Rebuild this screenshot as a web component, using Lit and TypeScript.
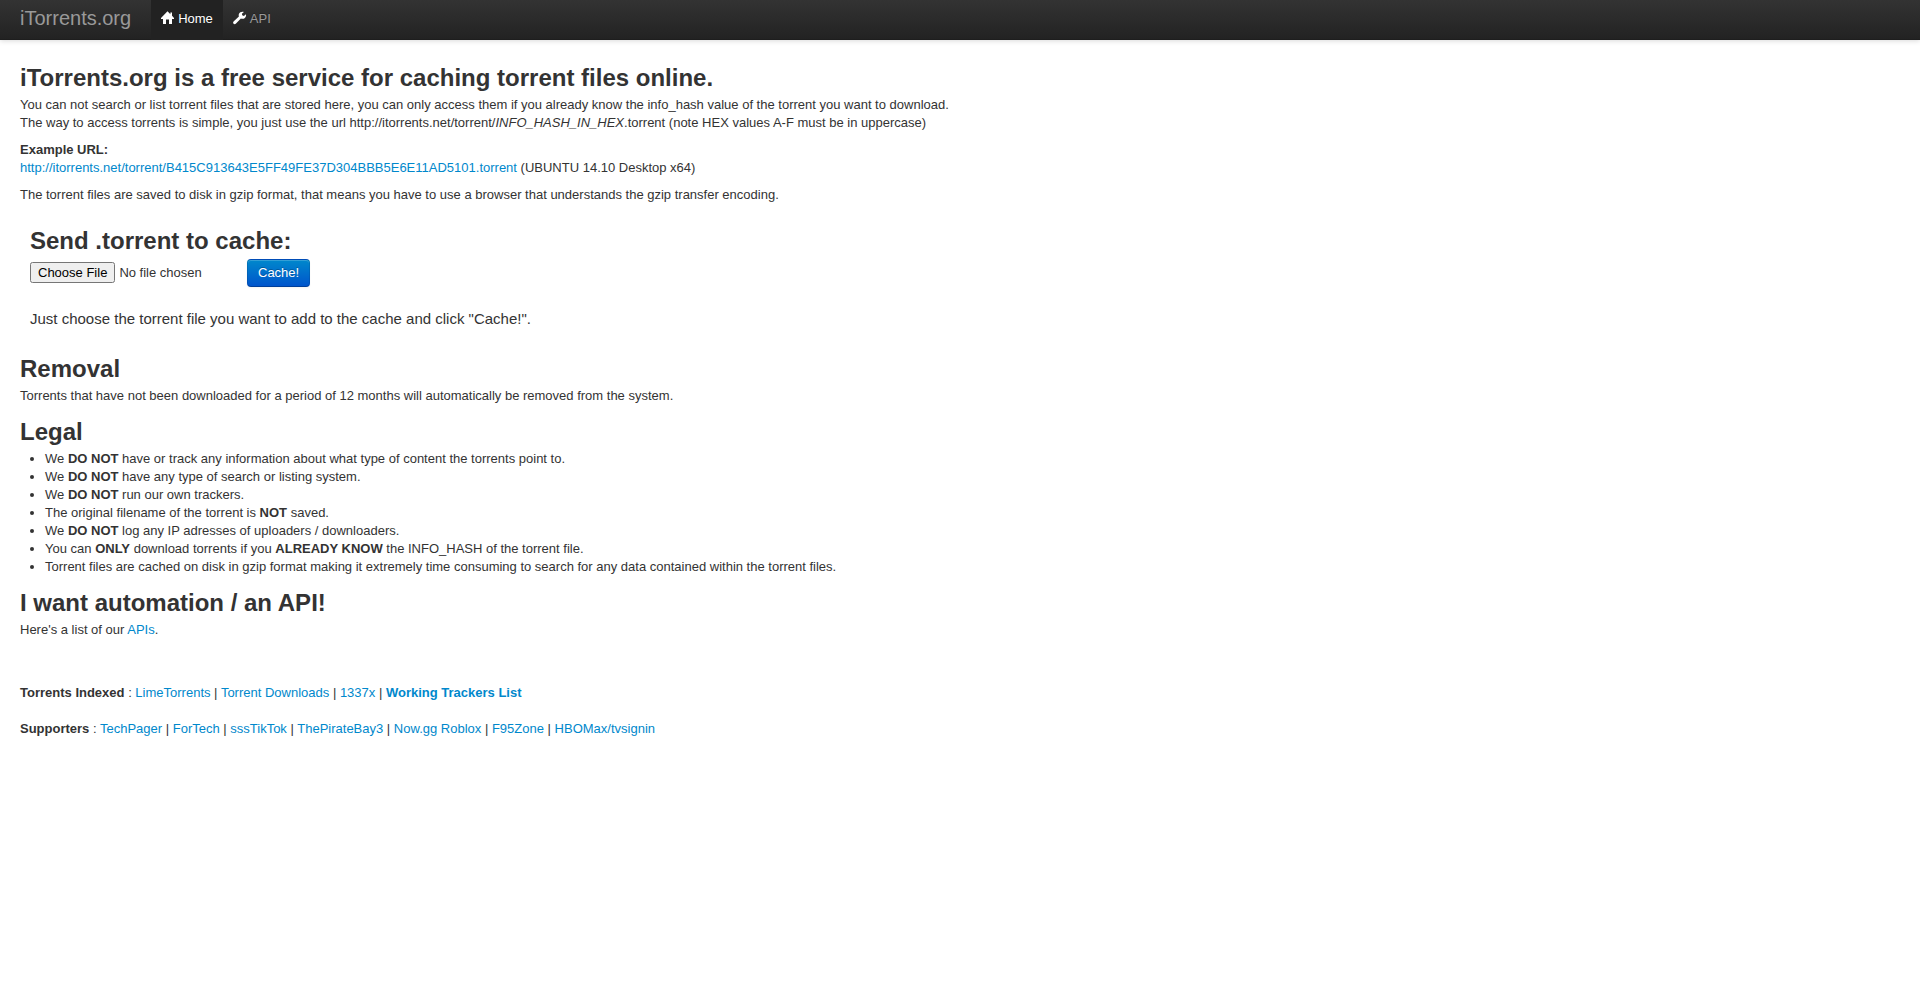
import { LitElement, html, css, svg } from "lit";
import { customElement } from "lit/decorators.js";

interface SiteLink {
  label: string;
  strong?: boolean;
}

const INDEXED: SiteLink[] = [
  { label: "LimeTorrents" },
  { label: "Torrent Downloads" },
  { label: "1337x" },
  { label: "Working Trackers List", strong: true },
];

const SUPPORTERS: SiteLink[] = [
  { label: "TechPager" },
  { label: "ForTech" },
  { label: "sssTikTok" },
  { label: "ThePirateBay3" },
  { label: "Now.gg Roblox" },
  { label: "F95Zone" },
  { label: "HBOMax/tvsignin" },
];

const homeShape = svg`<path d="M6.5 0.2 L0 7 V8 H2 V13 H5 V8.6 H8 V13 H11 V8 H13 V7 L11 4.8 V1.4 H9.4 V3.2 Z" />`;
const wrenchShape = svg`<path d="M12.9 3.2 L10.9 4.9 L9.2 4.3 L8.9 2.8 L10.9 0.9 C8.9 0.2 6.6 1.1 5.9 3 C5.6 3.9 5.7 4.7 5.9 5.4 L0.8 10.3 C-0.2 11.3 0 12.3 0.6 12.8 C1.2 13.4 2.2 13.4 3 12.6 L7.9 7.6 C9.2 8.1 11 7.9 12.1 6.7 C13.1 5.7 13.3 4.3 12.9 3.2 Z" />`;

@customElement("app-root")
export class AppRoot extends LitElement {
  static styles = css`
    :host {
      display: block;
      font-family: "Liberation Sans", Arial, sans-serif;
      font-size: 13px;
      line-height: 18px;
      color: #333;
      background: #fff;
    }
    a {
      color: #08c;
      text-decoration: none;
    }
    a:hover {
      text-decoration: underline;
    }
    .navbar {
      display: flex;
      height: 40px;
      padding: 0 20px;
      background: linear-gradient(to bottom, #333, #222);
      box-shadow: 0 1px 5px rgba(0, 0, 0, 0.15), inset 0 -1px 0 rgba(0, 0, 0, 0.1);
    }
    .brand {
      padding: 8px 20px 12px 0;
      font-size: 20px;
      line-height: 20px;
      color: #999;
    }
    .nav {
      display: flex;
      margin: 0;
      padding: 0;
      list-style: none;
    }
    .nav-link {
      display: flex;
      align-items: flex-start;
      gap: 3px;
      height: 18px;
      padding: 10px 10px 12px;
      color: #999;
      text-shadow: 0 -1px 0 rgba(0, 0, 0, 0.25);
    }
    .nav-link.active {
      color: #fff;
      background: #222;
    }
    .icon {
      width: 14px;
      height: 14px;
      margin-top: 1px;
      fill: #fff;
    }
    .content {
      padding: 20px;
    }
    h2 {
      margin: 0;
      font-size: 24px;
      line-height: 36px;
      font-weight: bold;
      text-rendering: optimizelegibility;
    }
    p {
      margin: 0 0 9px;
    }
    .upload {
      padding: 10px 10px 22px;
    }
    .upload-row {
      display: flex;
      align-items: baseline;
      gap: 4px;
      margin-bottom: 22px;
    }
    .file {
      width: 213px;
      font: 13px "Liberation Sans", Arial, sans-serif;
      color: #333;
    }
    .submit {
      padding: 4px 10px;
      border: 1px solid;
      border-color: rgba(0, 0, 0, 0.1) rgba(0, 0, 0, 0.1) rgba(0, 0, 0, 0.25);
      border-radius: 4px;
      font: 13px/18px "Liberation Sans", Arial, sans-serif;
      color: #fff;
      text-shadow: 0 -1px 0 rgba(0, 0, 0, 0.25);
      background: #05c linear-gradient(to bottom, #08c, #05c) repeat-x;
      box-shadow: inset 0 1px 0 rgba(255, 255, 255, 0.2), 0 1px 2px rgba(0, 0, 0, 0.05);
      cursor: pointer;
    }
    .hint {
      margin: 0;
      font-size: 15px;
      line-height: 20px;
    }
    .facts {
      margin: 0 0 9px 25px;
      padding: 0;
    }
    .links {
      display: grid;
      gap: 18px;
      padding-top: 36px;
    }
    .links p {
      margin: 0;
    }
  `;

  private links(items: SiteLink[]) {
    return items.map(
      (item, i) =>
        html`${i ? " | " : ""}<a href="#">${item.strong ? html`<strong>${item.label}</strong>` : item.label}</a>`
    );
  }

  render() {
    return html`
      <nav class="navbar">
        <a class="brand" href="#">iTorrents.org</a>
        <ul class="nav">
          <li>
            <a class="nav-link active" href="#"><svg class="icon" viewBox="0 0 14 14" aria-hidden="true">${homeShape}</svg>Home</a>
          </li>
          <li>
            <a class="nav-link" href="#"><svg class="icon" viewBox="0 0 14 14" aria-hidden="true">${wrenchShape}</svg>API</a>
          </li>
        </ul>
      </nav>
      <main class="content">
        <h2>iTorrents.org is a free service for caching torrent files online.</h2>
        <p>
          You can not search or list torrent files that are stored here, you can only access them if you already know the info_hash value of the torrent you want to download.<br />
          The way to access torrents is simple, you just use the url http://itorrents.net/torrent/<em>INFO_HASH_IN_HEX</em>.torrent (note HEX values A-F must be in uppercase)
        </p>
        <p>
          <strong>Example URL:</strong><br />
          <a href="#">http://itorrents.net/torrent/B415C913643E5FF49FE37D304BBB5E6E11AD5101.torrent</a> (UBUNTU 14.10 Desktop x64)
        </p>
        <p>The torrent files are saved to disk in gzip format, that means you have to use a browser that understands the gzip transfer encoding.</p>
        <form class="upload" @submit=${(e: Event) => e.preventDefault()}>
          <h2><label for="torrent">Send .torrent to cache:</label></h2>
          <div class="upload-row">
            <input class="file" id="torrent" type="file" />
            <button class="submit" type="submit">Cache!</button>
          </div>
          <p class="hint">Just choose the torrent file you want to add to the cache and click "Cache!".</p>
        </form>
        <h2>Removal</h2>
        <p>Torrents that have not been downloaded for a period of 12 months will automatically be removed from the system.</p>
        <h2>Legal</h2>
        <ul class="facts">
          <li>We <strong>DO NOT</strong> have or track any information about what type of content the torrents point to.</li>
          <li>We <strong>DO NOT</strong> have any type of search or listing system.</li>
          <li>We <strong>DO NOT</strong> run our own trackers.</li>
          <li>The original filename of the torrent is <strong>NOT</strong> saved.</li>
          <li>We <strong>DO NOT</strong> log any IP adresses of uploaders / downloaders.</li>
          <li>You can <strong>ONLY</strong> download torrents if you <strong>ALREADY KNOW</strong> the INFO_HASH of the torrent file.</li>
          <li>Torrent files are cached on disk in gzip format making it extremely time consuming to search for any data contained within the torrent files.</li>
        </ul>
        <h2>I want automation / an API!</h2>
        <p>Here's a list of our <a href="#">APIs</a>.</p>
        <div class="links">
          <p><strong>Torrents Indexed</strong> : ${this.links(INDEXED)}</p>
          <p><strong>Supporters</strong> : ${this.links(SUPPORTERS)}</p>
        </div>
      </main>
    `;
  }
}
